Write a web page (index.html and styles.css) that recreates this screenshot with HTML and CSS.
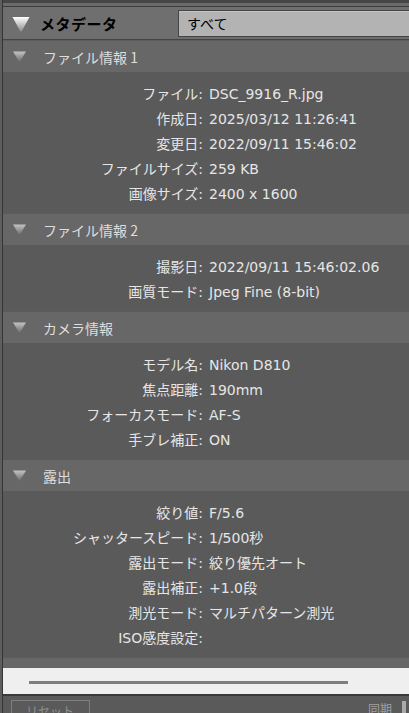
FILE: index.html
```html
<!DOCTYPE html>
<html lang="ja">
<head>
<meta charset="utf-8">
<title>メタデータ</title>
<link rel="stylesheet" href="styles.css">
</head>
<body>
<div class="panel">
  <div class="top1"></div>
  <div class="top2"></div>
  <div class="hdr">
    <svg class="tri-big" width="18" height="16" viewBox="0 0 18 16"><defs><linearGradient id="gb" x1="0" y1="0" x2="0" y2="1"><stop offset="0" stop-color="#ffffff"/><stop offset="1" stop-color="#8c8c8c"/></linearGradient></defs><path d="M0.5 1 H17.5 L9.6 15.5 H8.4 Z" fill="url(#gb)"/></svg>
    <span class="hdr-title">メタデータ</span>
    <div class="dropdown">すべて</div>
  </div>
  <div class="scroll">
    <div class="sec-h">
      <svg class="tri" width="13" height="11" viewBox="0 0 13 11"><defs><linearGradient id="gs" x1="0" y1="0" x2="0" y2="1"><stop offset="0" stop-color="#c4c4c4"/><stop offset="1" stop-color="#6e6e6e"/></linearGradient></defs><path d="M0 0.5 H13 L7 10.5 H6 Z" fill="url(#gs)"/></svg>
      <span>ファイル情報 1</span>
    </div>
    <div class="sec-b">
      <div class="row"><span class="lbl">ファイル:</span><span class="val">DSC_9916_R.jpg</span></div>
      <div class="row"><span class="lbl">作成日:</span><span class="val">2025/03/12 11:26:41</span></div>
      <div class="row"><span class="lbl">変更日:</span><span class="val">2022/09/11 15:46:02</span></div>
      <div class="row"><span class="lbl">ファイルサイズ:</span><span class="val">259 KB</span></div>
      <div class="row"><span class="lbl">画像サイズ:</span><span class="val">2400 x 1600</span></div>
    </div>
    <div class="sec-h">
      <svg class="tri" width="13" height="11" viewBox="0 0 13 11"><path d="M0 0.5 H13 L7 10.5 H6 Z" fill="url(#gs)"/></svg>
      <span>ファイル情報 2</span>
    </div>
    <div class="sec-b">
      <div class="row"><span class="lbl">撮影日:</span><span class="val">2022/09/11 15:46:02.06</span></div>
      <div class="row"><span class="lbl">画質モード:</span><span class="val">Jpeg Fine (8-bit)</span></div>
    </div>
    <div class="sec-h">
      <svg class="tri" width="13" height="11" viewBox="0 0 13 11"><path d="M0 0.5 H13 L7 10.5 H6 Z" fill="url(#gs)"/></svg>
      <span>カメラ情報</span>
    </div>
    <div class="sec-b">
      <div class="row"><span class="lbl">モデル名:</span><span class="val">Nikon D810</span></div>
      <div class="row"><span class="lbl">焦点距離:</span><span class="val">190mm</span></div>
      <div class="row"><span class="lbl">フォーカスモード:</span><span class="val">AF-S</span></div>
      <div class="row"><span class="lbl">手ブレ補正:</span><span class="val">ON</span></div>
    </div>
    <div class="sec-h">
      <svg class="tri" width="13" height="11" viewBox="0 0 13 11"><path d="M0 0.5 H13 L7 10.5 H6 Z" fill="url(#gs)"/></svg>
      <span>露出</span>
    </div>
    <div class="sec-b">
      <div class="row"><span class="lbl">絞り値:</span><span class="val">F/5.6</span></div>
      <div class="row"><span class="lbl">シャッタースピード:</span><span class="val">1/500秒</span></div>
      <div class="row"><span class="lbl">露出モード:</span><span class="val">絞り優先オート</span></div>
      <div class="row"><span class="lbl">露出補正:</span><span class="val">+1.0段</span></div>
      <div class="row"><span class="lbl">測光モード:</span><span class="val">マルチパターン測光</span></div>
      <div class="row"><span class="lbl">ISO感度設定:</span><span class="val"></span></div>
    </div>
    <div class="sec-h">
      <svg class="tri" width="13" height="11" viewBox="0 0 13 11"><path d="M0 0.5 H13 L7 10.5 H6 Z" fill="url(#gs)"/></svg>
      <span>画像設定</span>
    </div>
  </div>
  <div class="hscroll"><div class="thumb"></div></div>
  <div class="footer">
    <div class="btn">リセット</div>
    <span class="sync">同期</span>
    <div class="bar"></div>
  </div>
</div>
</body>
</html>
```
FILE: styles.css
```css
html, body {
  margin: 0;
  padding: 0;
  height: 713px;
  overflow: hidden;
  background: #5e5e5e;
}

.panel {
  margin-left: 2px;
  border-left: 1px solid #353535;
  height: 713px;
  display: flex;
  flex-direction: column;
  font-family: "DejaVu Sans", "Noto Sans CJK JP", sans-serif;
  font-size: 14px;
  color: #e6e6e6;
}

.top1 {
  height: 3px;
  background: #464646;
  flex: 0 0 auto;
}

.top2 {
  height: 3px;
  background: #6a6a6a;
  flex: 0 0 auto;
}

.hdr {
  flex: 0 0 auto;
  height: 32px;
  border-top: 1px solid #3c3c3c;
  border-bottom: 1px solid #444444;
  background: #6f6f6f;
  display: flex;
  align-items: center;
  padding-left: 9px;
}

.tri-big {
  display: block;
  margin-top: 1px;
}

.hdr-title {
  margin-left: 10px;
  font-family: "Noto Sans CJK JP", sans-serif;
  font-weight: 700;
  font-size: 15px;
  color: #000;
  letter-spacing: 0.5px;
}

.dropdown {
  margin-left: auto;
  width: 222px;
  height: 25px;
  border: 1px solid #454545;
  border-right: none;
  background: #b3b3b3;
  box-shadow: inset 0 1px 0 #c4c4c4;
  font-family: "Noto Sans CJK JP", sans-serif;
  font-size: 14px;
  line-height: 24px;
  color: #000;
  padding-left: 8px;
}

.scroll {
  flex: 1 1 auto;
  overflow: hidden;
  background: #5a5a5a;
}

.sec-h {
  height: 31px;
  border-top: 1px solid #5c5c5c;
  background: #676767;
  display: flex;
  align-items: center;
  padding-left: 10px;
  color: #dedede;
  font-family: "Noto Sans CJK JP", sans-serif;
}

.sec-h .tri {
  display: block;
  margin-right: 17px;
}

.sec-b {
  padding: 10px 0 6px;
}

.row {
  display: grid;
  grid-template-columns: 200px 1fr;
  column-gap: 6px;
  height: 25px;
  line-height: 25px;
  white-space: nowrap;
}

.lbl {
  text-align: right;
}

.hscroll {
  flex: 0 0 auto;
  height: 26px;
  background: #efefef;
  padding-top: 13px;
  box-sizing: border-box;
}

.thumb {
  margin-left: 26px;
  width: 319px;
  height: 3px;
  background: #7e7e7e;
}

.footer {
  flex: 0 0 auto;
  height: 17px;
  border-top: 2px solid #393939;
  background: #5a5a5a;
  display: flex;
  align-items: flex-start;
  padding-left: 8px;
  overflow: hidden;
}

.btn {
  margin-top: 4px;
  width: 77px;
  height: 20px;
  border: 1px solid #7f7f7f;
  color: #8e8e8e;
  font-family: "Noto Sans CJK JP", sans-serif;
  font-size: 12px;
  line-height: 20px;
  padding-left: 14px;
  box-sizing: border-box;
  width: 79px;
}

.sync {
  margin-left: auto;
  margin-top: 5px;
  font-family: "Noto Sans CJK JP", sans-serif;
  font-size: 12px;
  line-height: 16px;
  color: #a0a0a0;
}

.bar {
  margin-left: 10px;
  margin-right: 3px;
  margin-top: 5px;
  width: 4px;
  height: 14px;
  background: #aaaaaa;
}
```
